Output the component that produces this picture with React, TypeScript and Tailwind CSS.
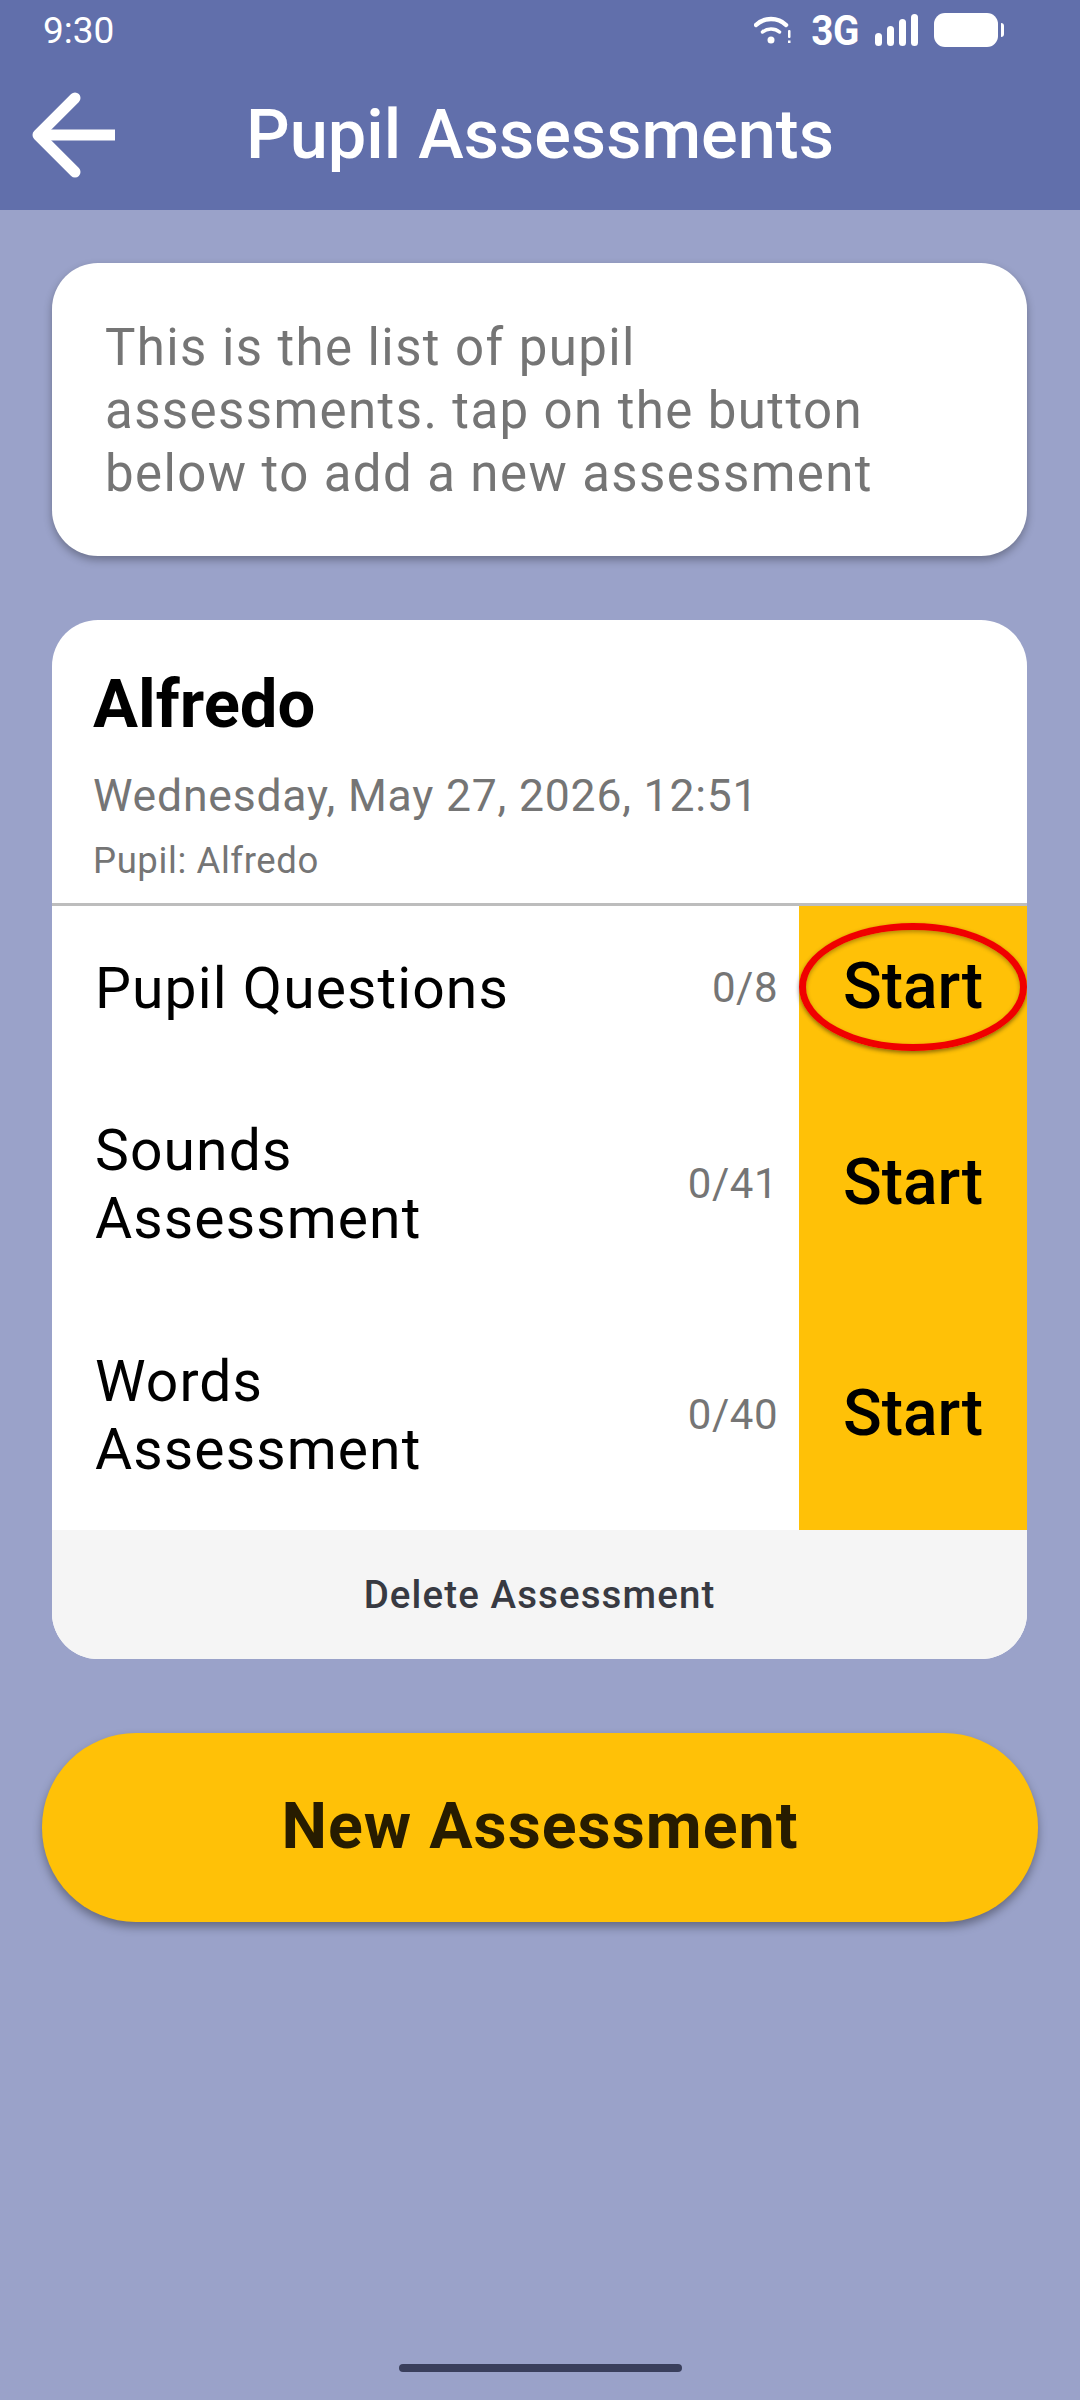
const rows = [
  { lines: ["Pupil Questions"], count: "0/8", height: "h-[162px]", circled: true },
  { lines: ["Sounds", "Assessment"], count: "0/41", height: "h-[230px]", circled: false },
  { lines: ["Words", "Assessment"], count: "0/40", height: "h-[232px]", circled: false },
];

function StatusIcons() {
  return (
    <div className="flex items-center">
      <svg width="38" height="32" viewBox="0 0 38 32" fill="none" className="mr-[14px]">
        <path d="M2 11 C10 3 24 3 32 11" stroke="white" strokeWidth="4.5" strokeLinecap="round" />
        <path d="M8.5 18 C13 14 21 14 25.5 18" stroke="white" strokeWidth="3.5" strokeLinecap="round" />
        <circle cx="17" cy="26" r="3.5" fill="white" />
        <rect x="34" y="16" width="2.5" height="8" rx="1" fill="white" />
        <rect x="34" y="26.5" width="2.5" height="2.5" fill="white" />
      </svg>
      <span className="mr-[16px] origin-right scale-x-90 text-[43px] leading-none font-bold tracking-[-0.5px] text-white">
        3G
      </span>
      <div className="mr-[16px] flex items-end gap-[5px]">
        <div className="h-[13px] w-[7px] rounded-full bg-white" />
        <div className="h-[20px] w-[7px] rounded-full bg-white" />
        <div className="h-[27px] w-[7px] rounded-full bg-white" />
        <div className="h-[32px] w-[7px] rounded-full bg-white" />
      </div>
      <div className="h-[34px] w-[64px] rounded-[11px] bg-white" />
      <div className="ml-[3px] h-[14px] w-[3px] rounded-r-full bg-white" />
    </div>
  );
}

export default function App() {
  return (
    <div className="relative h-[2400px] w-[1080px] overflow-hidden bg-[#9aa2c9] font-['Roboto',sans-serif]">
      {/* App bar with status bar */}
      <header className="h-[210px] bg-[#616fab] text-white">
        <div className="flex h-[60px] items-center justify-between pr-[76px] pl-[43px]">
          <span className="text-[37px] leading-none">9:30</span>
          <StatusIcons />
        </div>
        <div className="flex h-[150px] items-center pl-[30px]">
          <svg width="88" height="88" viewBox="0 0 88 88" fill="none" className="shrink-0">
            <path d="M85 44 H8" stroke="white" strokeWidth="11" />
            <path d="M45 7 L8 44 L45 81" stroke="white" strokeWidth="11" strokeLinecap="round" strokeLinejoin="round" />
          </svg>
          <h1 className="ml-[128px] text-[68.5px] leading-none font-medium">Pupil Assessments</h1>
        </div>
      </header>

      <main className="flex flex-col">
        {/* Intro note */}
        <div className="mt-[53px] mr-[53px] ml-[52px] h-[293px] rounded-[46px] bg-white px-[53px] pt-[53px] shadow-[0_4px_8px_rgba(0,0,0,0.3)]">
          <p className="w-[800px] text-[51px] leading-[63px] tracking-[1.4px] text-[#757575]">
            This is the list of pupil assessments. tap on the button below to add a new assessment
          </p>
        </div>

        {/* Assessment card */}
        <section className="mt-[64px] mr-[53px] ml-[52px] overflow-hidden rounded-[46px] bg-white">
          <div className="h-[286px] border-b-[3px] border-[#bdbdbd] px-[41px] pt-[47px]">
            <h2 className="text-[67px] leading-[74px] font-bold text-black">Alfredo</h2>
            <p className="mt-[26px] text-[44.5px] leading-[58px] tracking-[0.8px] text-[#757575]">
              Wednesday, May 27, 2026, 12:51
            </p>
            <p className="mt-[13px] text-[36.5px] leading-[46px] tracking-[0.6px] text-[#757575]">Pupil: Alfredo</p>
          </div>

          {rows.map((row) => (
            <div key={row.lines[0]} className={`flex ${row.height}`}>
              <div className="flex flex-1 items-center pr-[21px] pl-[43px]">
                <span className="mt-[4px] text-[57px] leading-[68px] tracking-[1.1px] text-black">
                  {row.lines.map((line) => (
                    <span key={line} className="block">
                      {line}
                    </span>
                  ))}
                </span>
                <span className="ml-auto text-[42px] tracking-[0.5px] text-[#757575]">{row.count}</span>
              </div>
              <div className="relative flex w-[228px] items-center justify-center bg-[#ffc107]">
                <span className="text-[64px] leading-none font-medium text-black">Start</span>
                {row.circled && (
                  <div className="absolute top-[17px] left-0 h-[128px] w-[228px] rounded-[50%] border-[7px] border-[#f00000] shadow-[0_2px_4px_rgba(0,0,0,0.45),inset_0_2px_4px_rgba(0,0,0,0.3)]" />
                )}
              </div>
            </div>
          ))}

          <div className="flex h-[129px] items-center justify-center bg-[#f5f5f5]">
            <span className="text-[38.5px] font-medium tracking-[1.1px] text-[#383a42]">Delete Assessment</span>
          </div>
        </section>

        <button
          type="button"
          className="mx-[42px] mt-[74px] h-[189px] rounded-[94px] bg-[#ffc107] pb-[2px] text-[64.5px] font-bold tracking-[1px] text-[#271c00] shadow-[0_5px_10px_rgba(0,0,0,0.35)]"
        >
          New Assessment
        </button>
      </main>

      {/* Gesture bar */}
      <div className="absolute top-[2364px] left-[399px] h-[8px] w-[283px] rounded-full bg-[#3a3f5c]" />
    </div>
  );
}
